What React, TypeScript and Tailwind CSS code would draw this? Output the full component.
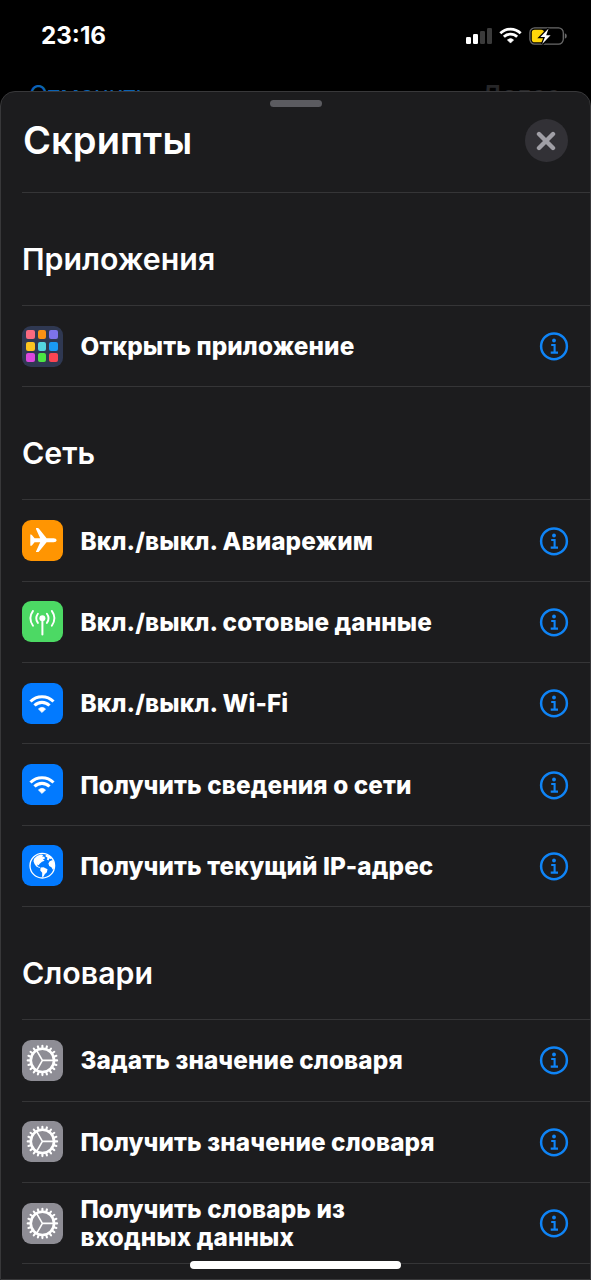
import React from "react";

type IconName = "apps" | "plane" | "cell" | "wifi" | "globe" | "gear";
type Row = { icon: IconName; lines: string[] };
type Section = { title: string; rows: Row[] };

const sections: Section[] = [
  { title: "Приложения", rows: [{ icon: "apps", lines: ["Открыть приложение"] }] },
  {
    title: "Сеть",
    rows: [
      { icon: "plane", lines: ["Вкл./выкл. Авиарежим"] },
      { icon: "cell", lines: ["Вкл./выкл. сотовые данные"] },
      { icon: "wifi", lines: ["Вкл./выкл. Wi-Fi"] },
      { icon: "wifi", lines: ["Получить сведения о сети"] },
      { icon: "globe", lines: ["Получить текущий IP-адрес"] },
    ],
  },
  {
    title: "Словари",
    rows: [
      { icon: "gear", lines: ["Задать значение словаря"] },
      { icon: "gear", lines: ["Получить значение словаря"] },
      { icon: "gear", lines: ["Получить словарь из", "входных данных"] },
    ],
  },
];

const tileColors = [
  "bg-[#fb6a80]", "bg-[#fb9214]", "bg-[#7d73ea]",
  "bg-[#fcc520]", "bg-[#55d5e2]", "bg-[#1a9af5]",
  "bg-[#dc48dc]", "bg-[#4ce543]", "bg-[#fb4552]",
];

const tileBackground: Record<IconName, string> = {
  apps: "bg-[#2f3852]",
  plane: "bg-[#ff9502]",
  cell: "bg-[#4cd964]",
  wifi: "bg-[#027aff]",
  globe: "bg-[#027aff]",
  gear: "bg-[#8e8d95]",
};

function Wifi({ className }: { className: string }) {
  return (
    <svg viewBox="0 0 26 18" className={className} fill="none" stroke="#fff" strokeWidth="3.1">
      <path d="M1.5 6.5A16.3 16.3 0 0 1 24.5 6.5" />
      <path d="M5.5 10.5A10.6 10.6 0 0 1 20.5 10.5" />
      <path d="M13 17.6L9.4 14Q13 10.7 16.6 14Z" fill="#fff" stroke="#fff" strokeWidth=".6" strokeLinejoin="round" />
    </svg>
  );
}

function Glyph({ name }: { name: IconName }) {
  switch (name) {
    case "apps":
      return (
        <div className="mr-[1px] grid grid-cols-3 gap-[2.6px]">
          {tileColors.map((c) => (
            <div key={c} className={"size-[8.8px] rounded-[2px] " + c} />
          ))}
        </div>
      );
    case "plane":
      return (
        <svg viewBox="0 0 41 41" className="size-full" fill="#fff">
          <path d="M34.6 20.2C34.6 21.4 33.3 22.2 31.6 22.2H24.6L17 31.4Q16.5 32 15.8 32H14.4Q13.8 32 14 31.4L18.2 22.2H12.6L9.9 25.4Q9.5 25.8 9 25.8H8.3V14.6H9Q9.5 14.6 9.9 15L12.6 18.2H18.2L14 9Q13.8 8 14.4 8H15.8Q16.5 8 17 8.8L24.6 18.2H31.6C33.3 18.2 34.6 19 34.6 20.2Z" />
        </svg>
      );
    case "cell":
      return (
        <svg viewBox="0 0 41 41" className="size-full" fill="none" stroke="#fff" strokeWidth="1.9" strokeLinecap="round">
          <circle cx="20.4" cy="17.3" r="3" fill="#fff" stroke="none" />
          <path d="M20.4 18V33.6" strokeWidth="2" />
          <path d="M15.9 12.7Q12.5 17.3 15.9 21.9M24.9 12.7Q28.3 17.3 24.9 21.9" />
          <path d="M11 9.9Q5.7 17.3 11 24.7M29.8 9.9Q35.1 17.3 29.8 24.7" />
        </svg>
      );
    case "wifi":
      return <Wifi className="mt-[1px] mr-[1px] h-[18px] w-[26px]" />;
    case "globe":
      return (
        <svg viewBox="0 0 41 41" className="size-full" fill="#fff">
          <circle cx="20.3" cy="20.7" r="12.3" fill="none" stroke="#fff" strokeWidth="1.3" />
          <path d="M12 13.8L15.2 10.8L19 9.4L21.4 9.9L20.1 11.6L22.4 11.8L23 13.6L20.9 14.2L22.6 15.8L20 16.8L17.7 18.7L16.6 20.2L15 19.5L16 21.6L18 22.1L17.6 22.9L14.3 21.6L12.5 19.1L11.5 16.2Z" />
          <path d="M18.6 22.5L21.5 22.3L25.5 24.3L24.9 27.2L22.9 29L21.4 31.8L20.1 32L20.2 27.8L18.3 25.4Z" />
          <path d="M24 9.5L27.8 11L30 13.3L28.4 14.1L27.2 13.4L26.7 15.4L24.8 14.4L25.5 12.7L23.4 11.2Z" />
          <path d="M27.7 16.3L30.5 15L32 17.2L32.5 20.5L31.8 23.8L30.9 24.7L29.4 22.2L27.2 21.1L26.4 18.5Z" />
        </svg>
      );
    case "gear":
      return (
        <svg viewBox="0 0 41 41" className="size-full" fill="none" stroke="#fff">
          <circle cx="20.4" cy="20.4" r="11.6" strokeWidth="2.6" />
          <g strokeWidth="2.1" strokeLinecap="round">
            {Array.from({ length: 20 }, (_, i) => (
              <path key={i} d="M32.6 20.4H35.1" transform={`rotate(${i * 18} 20.4 20.4)`} />
            ))}
          </g>
          <path d="M20.4 20.4H32M20.4 20.4L14.6 10.3M20.4 20.4L14.6 30.5" strokeWidth="1.6" />
        </svg>
      );
  }
}

function InfoIcon() {
  return (
    <svg viewBox="0 0 30 30" className="size-[30px] shrink-0" fill="none" stroke="#0f84f6">
      <circle cx="15" cy="15.3" r="12.9" strokeWidth="2.5" />
      <circle cx="15" cy="9.5" r="1.9" fill="#0f84f6" stroke="none" />
      <path d="M12.2 14H15.6V21.3M11.7 21.6H19" strokeWidth="2.1" />
    </svg>
  );
}

function StatusIcons() {
  return (
    <div className="flex items-center">
      <div className="flex h-4 items-end gap-[2px]">
        <div className="h-[6.5px] w-[5px] rounded-[1.2px] bg-white" />
        <div className="h-[9.5px] w-[5px] rounded-[1.2px] bg-white" />
        <div className="h-[12.5px] w-[5px] rounded-[1.2px] bg-[#3b3b3b]" />
        <div className="h-4 w-[5px] rounded-[1.2px] bg-[#3b3b3b]" />
      </div>
      <Wifi className="ml-[7px] h-[17px] w-[23px]" />
      <svg viewBox="0 0 38 18" className="ml-[6.5px] h-[18px] w-[38px]">
        <rect x=".9" y=".9" width="33.4" height="16.2" rx="4.8" fill="none" stroke="#6a6a6a" strokeWidth="1.3" />
        <path d="M35.8 6.2Q37.8 7 37.8 9T35.8 11.8Z" fill="#6a6a6a" />
        <rect x="2.8" y="2.8" width="12.2" height="12.4" rx="2.8" fill="#ffd60a" />
        <path d="M19.6 1.6L11.4 10H16L13.2 17L21.6 8.2H17.2Z" fill="#fff" stroke="#000" strokeWidth="2.6" paintOrder="stroke" />
      </svg>
    </div>
  );
}

export default function App() {
  return (
    <div className="relative flex h-[1280px] w-[591px] flex-col overflow-hidden bg-black font-['Inter',sans-serif] text-white">
      <div className="flex h-[91px] shrink-0 flex-col">
        <div className="flex h-[71px] shrink-0 items-center justify-between pr-[24.5px] pl-[41px]">
          <div className="pt-[1px] text-[24.2px] leading-none font-bold">23:16</div>
          <StatusIcons />
        </div>
        <div className="flex shrink-0 items-start justify-between pt-[9px] pr-[30px] pl-[29px] text-[25px] leading-[30px]">
          <span className="text-[#0b62b4]">Отменить</span>
          <span className="font-semibold text-[#262628]">Далее</span>
        </div>
      </div>

      <div className="relative z-10 flex h-[1189px] shrink-0 flex-col overflow-hidden rounded-t-[15px] border border-[#38383a] bg-[#1c1c1e]">
        <div className="mt-[8px] h-[7px] w-[52px] shrink-0 self-center rounded-full bg-[#5b5b60]" />
        <div className="flex h-[85px] shrink-0 items-start justify-between pt-[12px] pr-[22px] pl-[22px]">
          <h1 className="text-[38px] leading-[42px] font-[560] tracking-[0.1px]">Скрипты</h1>
          <button aria-label="Закрыть" className="flex size-[43px] items-center justify-center rounded-full bg-[#323136]">
            <svg viewBox="0 0 20 20" className="mr-[1px] size-5" stroke="#a09fa6" strokeWidth="4.4" strokeLinecap="round">
              <path d="M3 3L17 17M17 3L3 17" />
            </svg>
          </button>
        </div>
        {sections.map((s) => (
          <section key={s.title} className="shrink-0 pl-[21px]">
            <h2 className="flex h-[113px] items-center border-t border-[#353537] pt-[20px] text-[30.3px] leading-none font-[560]">
              {s.title}
            </h2>
            {s.rows.map((r) => (
              <div key={r.lines[0]} className="flex h-[81.36px] items-center border-t border-[#353537] pr-[21px]">
                <div className={"flex size-[41px] shrink-0 items-center justify-center rounded-[9px] " + tileBackground[r.icon]}>
                  <Glyph name={r.icon} />
                </div>
                <div className="ml-[17.5px] flex-1 text-[24.3px] leading-[28px] font-[780] tracking-[0.12px]">
                  {r.lines.map((l) => (
                    <div key={l} className="whitespace-nowrap">{l}</div>
                  ))}
                </div>
                <InfoIcon />
              </div>
            ))}
          </section>
        ))}
        <div className="ml-[21px] shrink-0 border-t border-[#353537]" />
      </div>
      <div className="absolute bottom-[11px] left-[190px] z-20 h-[8px] w-[211px] rounded-full bg-white" />
    </div>
  );
}
